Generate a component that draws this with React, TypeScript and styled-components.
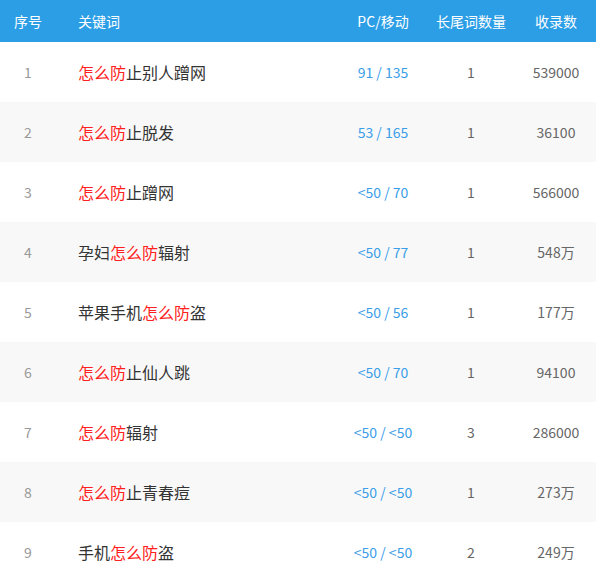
import React from "react";
import styled, { createGlobalStyle } from "styled-components";

const Global = createGlobalStyle`
  html, body { margin: 0; padding: 0; background: #fff; }
  body { font-family: "Noto Sans CJK SC", "Noto Sans", sans-serif; font-size: 14px; }
`;

const Table = styled.div`
  width: 596px;
  display: grid;
  grid-template-columns: 56px 284px 86px 90px 80px;
`;

const HeadCell = styled.div<{ $align?: "left" | "center" }>`
  height: 42px;
  background: #2b9ee6;
  color: #fff;
  display: flex;
  align-items: center;
  justify-content: ${(p) => (p.$align === "left" ? "flex-start" : "center")};
  padding-left: ${(p) => (p.$align === "left" ? "22px" : "0")};
  font-size: 14px;
`;

const Cell = styled.div<{ $stripe: boolean; $align?: "left" | "center"; $color: string; $size?: number }>`
  height: 60px;
  background: ${(p) => (p.$stripe ? "#f8f8f8" : "#fff")};
  color: ${(p) => p.$color};
  display: flex;
  align-items: center;
  justify-content: ${(p) => (p.$align === "left" ? "flex-start" : "center")};
  padding-left: ${(p) => (p.$align === "left" ? "22px" : "0")};
  font-size: ${(p) => p.$size ?? 14}px;
  white-space: pre;
`;

const Hl = styled.span`
  color: #ff2020;
`;

type Row = { kw: [string, string, string]; pc: string; tail: string; count: string };

const rows: Row[] = [
  { kw: ["", "怎么防", "止别人蹭网"], pc: "91 / 135", tail: "1", count: "539000" },
  { kw: ["", "怎么防", "止脱发"], pc: "53 / 165", tail: "1", count: "36100" },
  { kw: ["", "怎么防", "止蹭网"], pc: "<50 / 70", tail: "1", count: "566000" },
  { kw: ["孕妇", "怎么防", "辐射"], pc: "<50 / 77", tail: "1", count: "548万" },
  { kw: ["苹果手机", "怎么防", "盗"], pc: "<50 / 56", tail: "1", count: "177万" },
  { kw: ["", "怎么防", "止仙人跳"], pc: "<50 / 70", tail: "1", count: "94100" },
  { kw: ["", "怎么防", "辐射"], pc: "<50 / <50", tail: "3", count: "286000" },
  { kw: ["", "怎么防", "止青春痘"], pc: "<50 / <50", tail: "1", count: "273万" },
  { kw: ["手机", "怎么防", "盗"], pc: "<50 / <50", tail: "2", count: "249万" },
];

export default function App() {
  return (
    <>
      <Global />
      <Table>
        <HeadCell>序号</HeadCell>
        <HeadCell $align="left">关键词</HeadCell>
        <HeadCell>PC/移动</HeadCell>
        <HeadCell>长尾词数量</HeadCell>
        <HeadCell>收录数</HeadCell>
        {rows.map((r, i) => {
          const s = i % 2 === 1;
          return (
            <React.Fragment key={i}>
              <Cell $stripe={s} $color="#999">{i + 1}</Cell>
              <Cell $stripe={s} $align="left" $color="#333" $size={16}>
                {r.kw[0]}
                <Hl>{r.kw[1]}</Hl>
                {r.kw[2]}
              </Cell>
              <Cell $stripe={s} $color="#3a9ee8">{r.pc}</Cell>
              <Cell $stripe={s} $color="#666">{r.tail}</Cell>
              <Cell $stripe={s} $color="#666">{r.count}</Cell>
            </React.Fragment>
          );
        })}
      </Table>
    </>
  );
}
